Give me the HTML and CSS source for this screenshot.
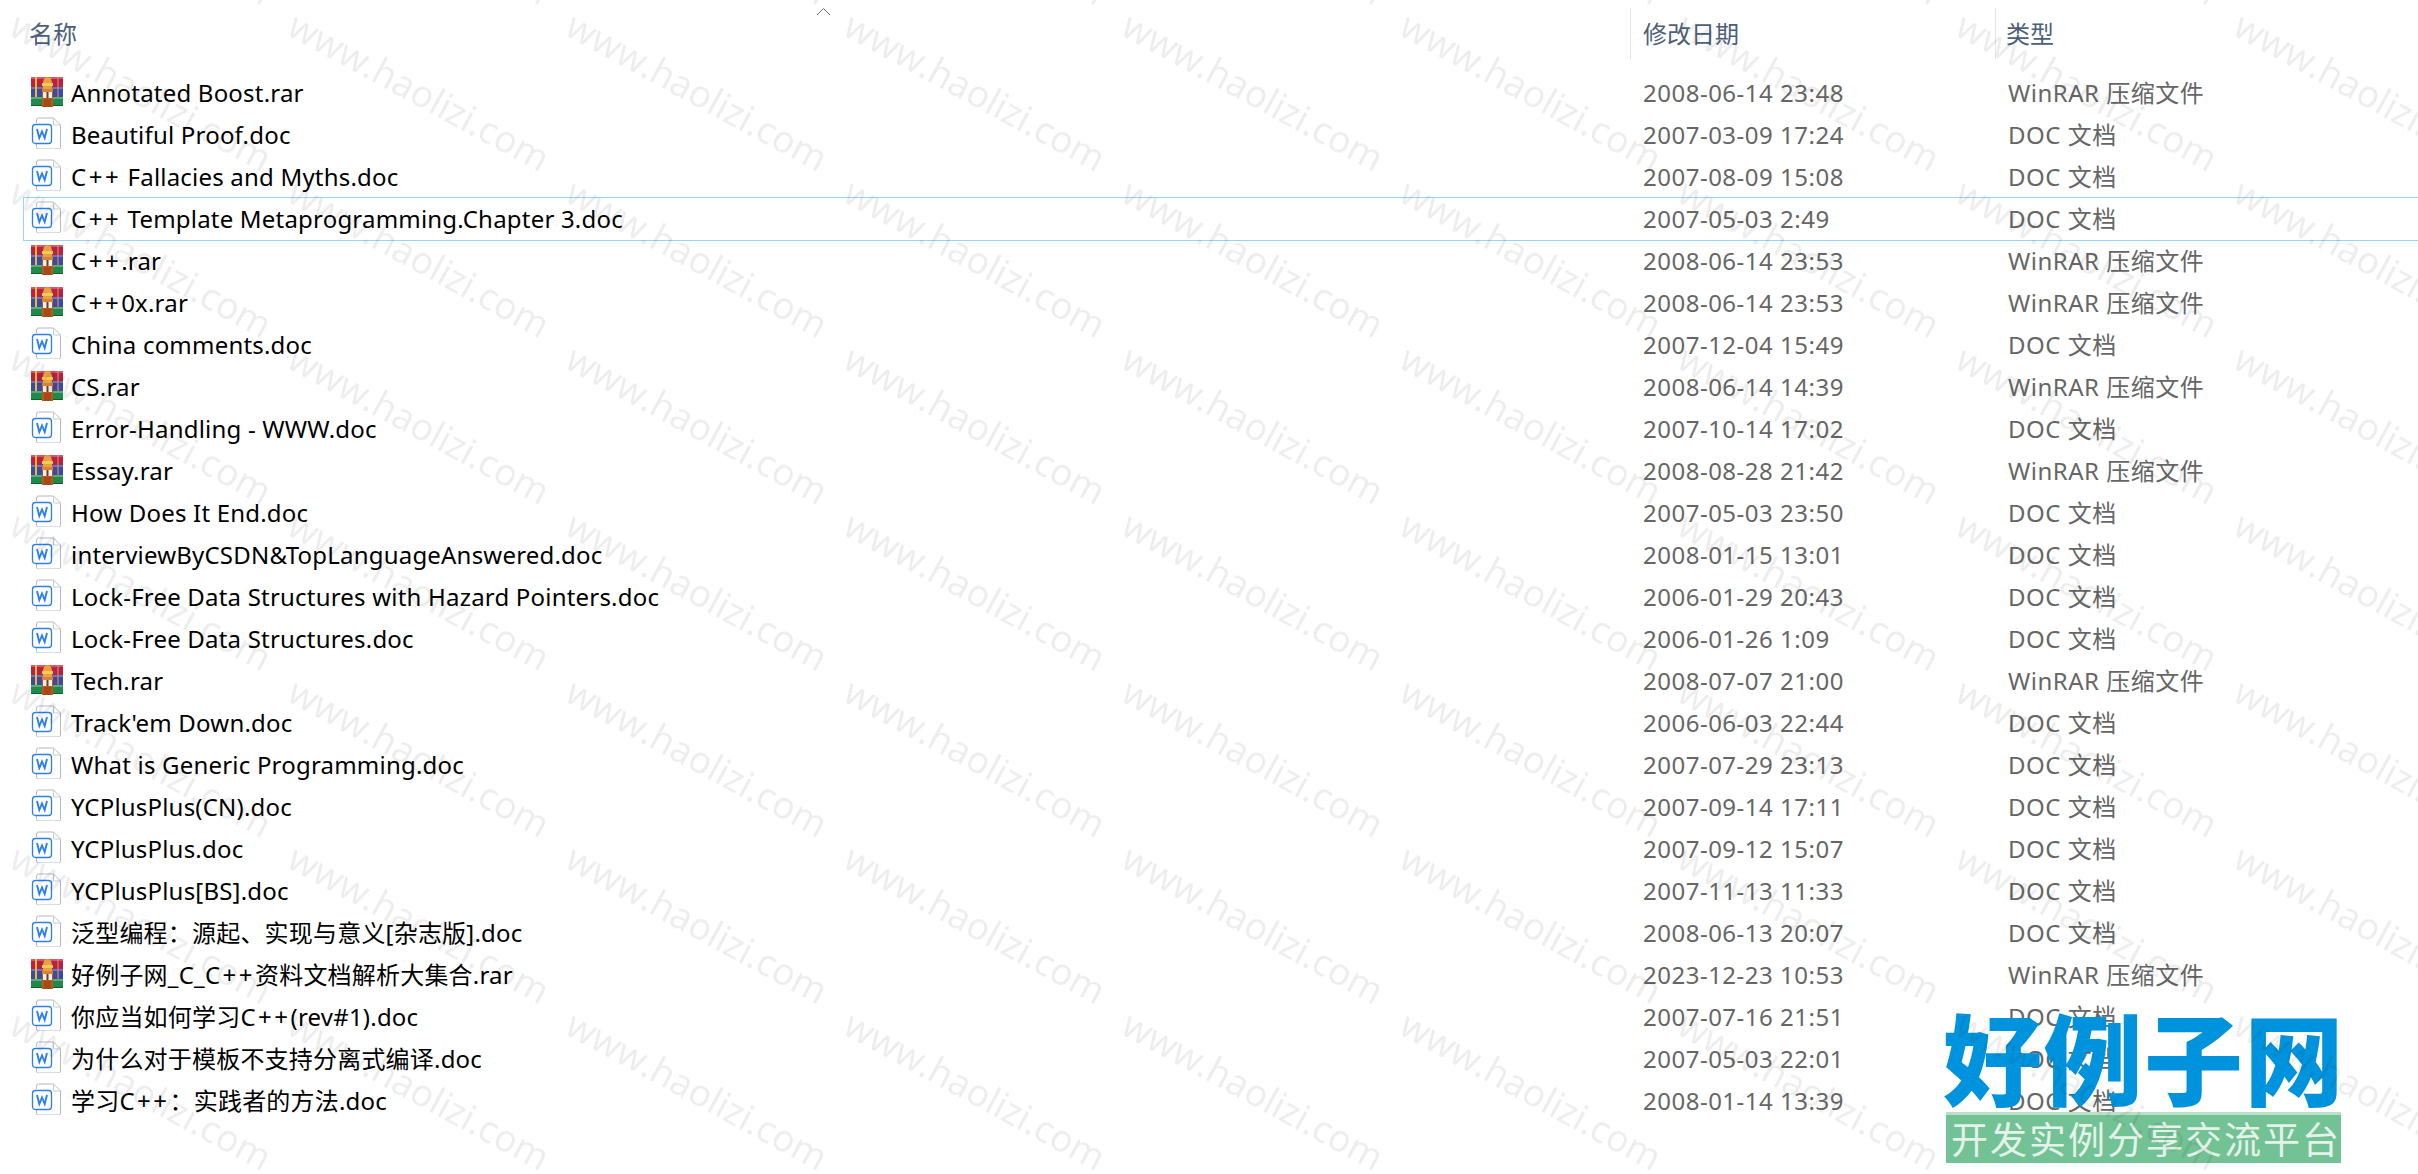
FILE: index.html
```html
<!DOCTYPE html>
<html lang="zh-CN">
<head>
<meta charset="utf-8">
<title>好例子网</title>
<link rel="stylesheet" href="styles.css">
</head>
<body>
<svg class="defs" width="0" height="0" aria-hidden="true">
  <symbol id="rar" viewBox="0 0 32 32">
    <rect x="0" y="2" width="32" height="10" fill="#b8213f"/>
    <rect x="0" y="2" width="32" height="2" fill="#d8566c"/>
    <rect x="0" y="12" width="32" height="10" fill="#3d4a9e"/>
    <rect x="0" y="12" width="32" height="2" fill="#6a75bd"/>
    <rect x="0" y="22" width="32" height="9" fill="#1f8a4a"/>
    <rect x="0" y="22" width="32" height="2" fill="#57ad78"/>
    <rect x="0" y="30" width="32" height="1" fill="#12602f"/>
    <rect x="4" y="2" width="2" height="20" fill="#e8b93a"/>
    <rect x="26" y="2" width="2" height="20" fill="#c98a7a" opacity=".6"/>
    <path d="M12 9 q0-7 4.500-7 t4.500 7 v6 h-9z" fill="#e9a23a"/>
    <rect x="11" y="8" width="11" height="3" fill="#f7c95c"/>
    <rect x="11" y="14" width="11" height="18" fill="#b9581f"/>
    <rect x="11" y="14" width="11" height="3" fill="#d98136"/>
    <rect x="12" y="17" width="9" height="6" fill="#f4efe6"/>
    <rect x="15.500" y="17" width="2" height="6" fill="#7a3a1a"/>
    <rect x="13" y="24" width="7" height="8" fill="#a84a18"/>
  </symbol>
  <symbol id="doc" viewBox="0 0 32 32">
    <path d="M5.500 6 V3 a2 2 0 0 1 2-2 H22.500 L29.500 8 V30 a2 2 0 0 1-2 2 H7.500 a2 2 0 0 1-2-2 V26" fill="#fff" stroke="#b4bbc6" stroke-width="1"/>
    <path d="M22.500 1 V8 H29.500" fill="none" stroke="#c8cdd6" stroke-width="1"/>
    <rect x="1.500" y="7.500" width="19" height="19" rx="3" fill="#fff" stroke="#2b7ff0" stroke-width="1.300"/>
    <path d="M6 12 L8.300 21 L11 14.500 L13.700 21 L16 12" fill="none" stroke="#2b7ff0" stroke-width="1.900"/>
  </symbol>
</svg>

<main class="sheet">
  <header class="grid head">
    <div class="h-name">名称</div>
    <div class="h-col">修改日期</div>
    <div class="h-col h-type">类型</div>
  </header>
  <svg class="caret" width="15" height="9" viewBox="0 0 15 9" aria-hidden="true"><path d="M1 8 L7.500 1.500 L14 8" fill="none" stroke="#6f6f6f" stroke-width="1"/></svg>

  <ul class="list">
    <li class="grid row"><span class="name"><svg class="ico"><use href="#rar"/></svg><span>Annotated Boost.rar</span></span><span class="cell">2008-06-14 23:48</span><span class="cell">WinRAR 压缩文件</span></li>
    <li class="grid row"><span class="name"><svg class="ico"><use href="#doc"/></svg><span>Beautiful Proof.doc</span></span><span class="cell">2007-03-09 17:24</span><span class="cell">DOC 文档</span></li>
    <li class="grid row"><span class="name"><svg class="ico"><use href="#doc"/></svg><span><span class="pp">C++</span> Fallacies and Myths.doc</span></span><span class="cell">2007-08-09 15:08</span><span class="cell">DOC 文档</span></li>
    <li class="grid row selected"><span class="name"><svg class="ico"><use href="#doc"/></svg><span><span class="pp">C++</span> Template Metaprogramming.Chapter 3.doc</span></span><span class="cell">2007-05-03 2:49</span><span class="cell">DOC 文档</span></li>
    <li class="grid row"><span class="name"><svg class="ico"><use href="#rar"/></svg><span><span class="pp">C++</span>.rar</span></span><span class="cell">2008-06-14 23:53</span><span class="cell">WinRAR 压缩文件</span></li>
    <li class="grid row"><span class="name"><svg class="ico"><use href="#rar"/></svg><span><span class="pp">C++</span>0x.rar</span></span><span class="cell">2008-06-14 23:53</span><span class="cell">WinRAR 压缩文件</span></li>
    <li class="grid row"><span class="name"><svg class="ico"><use href="#doc"/></svg><span>China comments.doc</span></span><span class="cell">2007-12-04 15:49</span><span class="cell">DOC 文档</span></li>
    <li class="grid row"><span class="name"><svg class="ico"><use href="#rar"/></svg><span>CS.rar</span></span><span class="cell">2008-06-14 14:39</span><span class="cell">WinRAR 压缩文件</span></li>
    <li class="grid row"><span class="name"><svg class="ico"><use href="#doc"/></svg><span>Error-Handling - WWW.doc</span></span><span class="cell">2007-10-14 17:02</span><span class="cell">DOC 文档</span></li>
    <li class="grid row"><span class="name"><svg class="ico"><use href="#rar"/></svg><span>Essay.rar</span></span><span class="cell">2008-08-28 21:42</span><span class="cell">WinRAR 压缩文件</span></li>
    <li class="grid row"><span class="name"><svg class="ico"><use href="#doc"/></svg><span>How Does It End.doc</span></span><span class="cell">2007-05-03 23:50</span><span class="cell">DOC 文档</span></li>
    <li class="grid row"><span class="name"><svg class="ico"><use href="#doc"/></svg><span>interviewByCSDN&amp;TopLanguageAnswered.doc</span></span><span class="cell">2008-01-15 13:01</span><span class="cell">DOC 文档</span></li>
    <li class="grid row"><span class="name"><svg class="ico"><use href="#doc"/></svg><span>Lock-Free Data Structures with Hazard Pointers.doc</span></span><span class="cell">2006-01-29 20:43</span><span class="cell">DOC 文档</span></li>
    <li class="grid row"><span class="name"><svg class="ico"><use href="#doc"/></svg><span>Lock-Free Data Structures.doc</span></span><span class="cell">2006-01-26 1:09</span><span class="cell">DOC 文档</span></li>
    <li class="grid row"><span class="name"><svg class="ico"><use href="#rar"/></svg><span>Tech.rar</span></span><span class="cell">2008-07-07 21:00</span><span class="cell">WinRAR 压缩文件</span></li>
    <li class="grid row"><span class="name"><svg class="ico"><use href="#doc"/></svg><span>Track'em Down.doc</span></span><span class="cell">2006-06-03 22:44</span><span class="cell">DOC 文档</span></li>
    <li class="grid row"><span class="name"><svg class="ico"><use href="#doc"/></svg><span>What is Generic Programming.doc</span></span><span class="cell">2007-07-29 23:13</span><span class="cell">DOC 文档</span></li>
    <li class="grid row"><span class="name"><svg class="ico"><use href="#doc"/></svg><span>YCPlusPlus(CN).doc</span></span><span class="cell">2007-09-14 17:11</span><span class="cell">DOC 文档</span></li>
    <li class="grid row"><span class="name"><svg class="ico"><use href="#doc"/></svg><span>YCPlusPlus.doc</span></span><span class="cell">2007-09-12 15:07</span><span class="cell">DOC 文档</span></li>
    <li class="grid row"><span class="name"><svg class="ico"><use href="#doc"/></svg><span>YCPlusPlus[BS].doc</span></span><span class="cell">2007-11-13 11:33</span><span class="cell">DOC 文档</span></li>
    <li class="grid row"><span class="name"><svg class="ico"><use href="#doc"/></svg><span>泛型编程&#xFF1A;源起、实现与意义[杂志版].doc</span></span><span class="cell">2008-06-13 20:07</span><span class="cell">DOC 文档</span></li>
    <li class="grid row"><span class="name"><svg class="ico"><use href="#rar"/></svg><span>好例子网_C_<span class="pp">C++</span>资料文档解析大集合.rar</span></span><span class="cell">2023-12-23 10:53</span><span class="cell">WinRAR 压缩文件</span></li>
    <li class="grid row"><span class="name"><svg class="ico"><use href="#doc"/></svg><span>你应当如何学习<span class="pp">C++</span>(rev#1).doc</span></span><span class="cell">2007-07-16 21:51</span><span class="cell">DOC 文档</span></li>
    <li class="grid row"><span class="name"><svg class="ico"><use href="#doc"/></svg><span>为什么对于模板不支持分离式编译.doc</span></span><span class="cell">2007-05-03 22:01</span><span class="cell">DOC 文档</span></li>
    <li class="grid row"><span class="name"><svg class="ico"><use href="#doc"/></svg><span>学习<span class="pp">C++</span>&#xFF1A;实践者的方法.doc</span></span><span class="cell">2008-01-14 13:39</span><span class="cell">DOC 文档</span></li>
  </ul>

  <aside class="logo">
    <div class="logo-title">好例子网</div>
    <div class="logo-sub">开发实例分享交流平台</div>
  </aside>

  <svg class="watermark" width="2418" height="1174" aria-hidden="true">
    <defs>
      <pattern id="wm" x="6" y="17" width="278" height="166.500" patternUnits="userSpaceOnUse">
        <text class="wm-text" transform="translate(1 17) rotate(28.500)">www.haolizi.com</text>
      </pattern>
    </defs>
    <rect width="2418" height="1174" fill="url(#wm)"/>
  </svg>
</main>
</body>
</html>
```
FILE: styles.css
```css
* { box-sizing: border-box; }
html, body { margin: 0; padding: 0; height: 100%; overflow: hidden; background: #fff; }
body { font-family: "Noto Sans", "Noto Sans CJK SC", sans-serif; font-size: 24px; color: #000; }
.defs { display: block; height: 0; }
.sheet { position: relative; width: 2418px; height: 1174px; overflow: hidden; }

.grid { display: grid; grid-template-columns: 1606px 365px 1fr; margin-left: 24px; }

.head { height: 72px; padding-top: 8px; color: #4c607a; font-size: 24px; }
.h-name { padding: 9px 0 0 5px; line-height: 34px; }
.h-col { height: 51px; padding: 9px 0 0 12px; line-height: 34px; border-left: 1px solid #e5e5e5; }
.h-type { padding-left: 10px; }
.caret { position: absolute; left: 816px; top: 7px; }

.list { list-style: none; margin: 0; padding: 0; }
.row { height: 42px; line-height: 42px; }
.selected { outline: 1px solid #99d1ff; }
.name { display: flex; align-items: center; gap: 8px; padding-left: 7px; white-space: nowrap; letter-spacing: .2px; }
.pp { letter-spacing: 2.500px; }
.ico { width: 32px; height: 32px; flex: none; margin-top: -4px; }
.cell { padding-left: 13px; color: #666; white-space: nowrap; letter-spacing: .5px; }

.logo { position: absolute; left: 1943px; top: 1001px; width: 398px; }
.logo-title { height: 111px; font-family: "Noto Sans CJK SC", sans-serif; font-weight: 900; font-size: 99px; line-height: 108px; letter-spacing: 1.500px; color: #0093dd; white-space: nowrap; }
.logo-sub { margin-left: 3px; height: 51px; background: #73c295; border-top: 3px solid #bcdfc9; font-family: "Noto Sans CJK SC", sans-serif; font-size: 37px; line-height: 46px; letter-spacing: 2px; padding-left: 5px; color: #e4f3ea; white-space: nowrap; }

.watermark { position: absolute; left: 0; top: 0; pointer-events: none; }
.wm-text { font-family: "Open Sans", sans-serif; font-size: 37px; fill: rgba(0, 0, 0, .07); }
```
